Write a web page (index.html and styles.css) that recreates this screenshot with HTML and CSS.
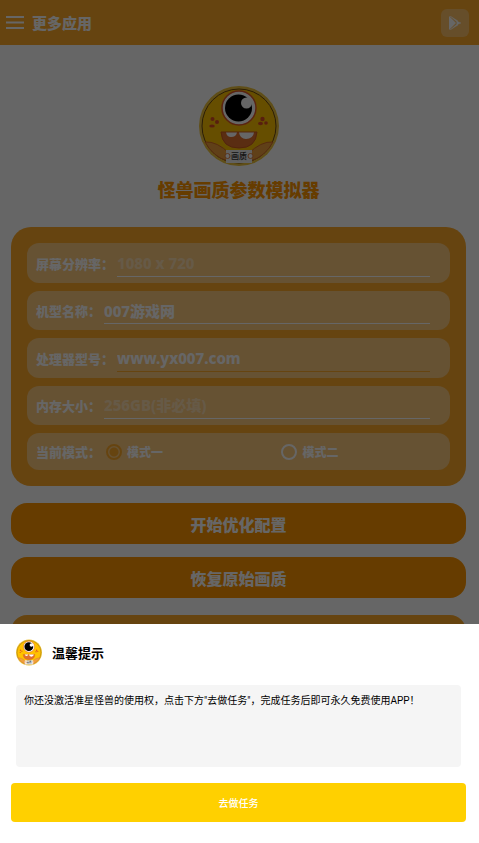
FILE: index.html
```html
<!DOCTYPE html>
<html lang="zh-CN">
<head>
<meta charset="utf-8">
<meta name="viewport" content="width=device-width, initial-scale=1">
<title>怪兽画质参数模拟器</title>
<link rel="stylesheet" href="styles.css">
</head>
<body>
<header class="topbar">
  <button class="menu" aria-label="菜单"><svg width="18" height="13" viewBox="0 0 18 13"><path d="M0 1H18M0 6.500H18M0 12H18" stroke="#fff" stroke-width="2"/></svg></button>
  <h1>更多应用</h1>
  <button class="play" aria-label="应用商店"><svg width="14" height="14" viewBox="0 0 14 14"><path d="M1 0L8 7L1 14Z" fill="#fff"/><path d="M2 0L9 6L10 5ZM2 14L9 8L10 9ZM9.500 5.500L13 7L9.500 8.500L8.500 7Z" fill="#fff" stroke="#fff" stroke-width=".4"/></svg></button>
</header>
<main class="page">
  <svg class="logo" viewBox="0 0 80 80" role="img" aria-label="怪兽">
    <g id="monster">
      <circle cx="40" cy="40" r="40" fill="#eec33c"/>
      <circle cx="40" cy="40" r="37" fill="#ffc200" stroke="#6b4a10" stroke-width="1"/>
      <path d="M6 56Q18 55 31 68L29 75Q14 71 6 56ZM74 56Q62 55 49 68L51 75Q66 71 74 56Z" fill="#f0a03c" stroke="#d66a2a" stroke-width="1"/>
      <circle cx="40" cy="22" r="17" fill="#fff" stroke="#e0592a" stroke-width="1.5"/>
      <circle cx="39.500" cy="22" r="13.500" fill="#000"/>
      <circle cx="47.500" cy="17" r="5.500" fill="#fff"/>
      <path d="M22 46H58Q57 62 40 62Q23 62 22 46Z" fill="#e0702f" stroke="#cf5a20" stroke-width="1"/>
      <path d="M27 46.500H38Q37 51 32 51Q28 51 27 46.500ZM40 46.500H55Q54 53 47 53Q41 53 40 46.500Z" fill="#fff"/>
      <g fill="#dd4f24"><circle cx="13.500" cy="33" r="2"/><circle cx="18" cy="36" r="2"/><ellipse cx="13" cy="40" rx="2.800" ry="1.500"/><circle cx="63.500" cy="33" r="2.200"/><circle cx="67" cy="37" r="1.800"/><ellipse cx="61.500" cy="37.500" rx="2.500" ry="1.700"/></g>
      <path d="M27 64H53V77H27Z" fill="#f2f2f2"/>
      <circle cx="28.500" cy="70" r="2.500" fill="#fff" stroke="#e08040"/><circle cx="51.500" cy="70" r="2.500" fill="#fff" stroke="#e08040"/>
      <text x="40" y="73" text-anchor="middle" class="badge">画质</text>
    </g>
  </svg>
  <h2>怪兽画质参数模拟器</h2>
  <form class="card">
    <div class="row"><label for="res">屏幕分辨率：</label><input class="field" id="res" placeholder="1080 x 720"></div>
    <div class="row"><label for="model">机型名称：</label><input class="field" id="model" value="007游戏网"></div>
    <div class="row"><label for="cpu">处理器型号：</label><input class="field current" id="cpu" value="www.yx007.com"></div>
    <div class="row"><label for="ram">内存大小：</label><input class="field" id="ram" placeholder="256GB(非必填)"></div>
    <div class="row mode"><span>当前模式：</span>
      <div class="options">
        <label><input type="radio" name="mode" checked>模式一</label>
        <label><input type="radio" name="mode">模式二</label>
      </div>
    </div>
  </form>
  <button class="action">开始优化配置</button>
  <button class="action">恢复原始画质</button>
  <div class="next"></div>
</main>
<div class="scrim"></div>
<section class="sheet" role="dialog" aria-labelledby="tip">
  <div class="sheet-head"><svg class="avatar" viewBox="0 0 80 80" aria-hidden="true"><use href="#monster"/></svg><h3 id="tip">温馨提示</h3></div>
  <p>你还没激活准星怪兽的使用权，点击下方"去做任务"，完成任务后即可永久免费使用APP！</p>
  <button class="task">去做任务</button>
</section>
</body>
</html>
```
FILE: styles.css
```css
* { box-sizing: border-box; margin: 0; }
html, body { height: 100%; }
body {
  background: #fff;
  color: #fff;
  font-family: "Noto Sans", "Noto Sans CJK SC", sans-serif;
  overflow: hidden;
}
button, input { font: inherit; color: inherit; border: 0; padding: 0; background: none; border-radius: 0; }
.badge { font-size: 8px; font-weight: 500; fill: #333; }
.topbar { display: flex; align-items: center; height: 45px; padding: 0 10px 0 6px; background: #ffaa2a; }
.menu, .play { display: flex; align-items: center; justify-content: center; }
.topbar h1 { flex: 1; margin-left: 8px; font-size: 15px; line-height: 20px; font-weight: 900; }
.play { width: 28px; height: 28px; border-radius: 6px; background: rgba(255, 255, 255, .3); }
.page { display: flex; flex-direction: column; padding: 41px 13px 0 11px; }
.logo { width: 80px; height: 80px; align-self: center; }
h2 { margin: 11px 0 23px; text-align: center; color: #ff9600; font-size: 18px; line-height: 27px; font-weight: 900; }
.card {
  display: grid;
  grid-template-rows: 40px 39px 40px 39px 37px;
  gap: 8px;
  padding: 16px;
  margin-bottom: 17px;
  border-radius: 20px;
  background: #ffaa2a;
}
.row {
  display: flex;
  align-items: center;
  gap: 3px;
  padding: 0 20px 0 9px;
  border-radius: 12px;
  background: rgba(255, 255, 255, .4);
  font-size: 13px;
  font-weight: 900;
  white-space: nowrap;
}
.field {
  flex: 1;
  min-width: 0;
  height: 27px;
  border-bottom: 1px solid #fff;
  font-size: 15px;
  font-weight: 800;
  outline: 0;
}
.field::placeholder { color: #fff; opacity: .4; }
.current { border-color: #ffaa2a; }
.mode { gap: 5px; padding-right: 0; }
.options { flex: 1; display: grid; grid-template-columns: 51% 1fr; }
.options label { display: flex; align-items: center; gap: 5px; font-size: 12px; }
.options input { appearance: none; width: 16px; height: 16px; margin: 0; border: 2px solid #fff; border-radius: 50%; }
.options input:checked { border-color: #ffaa2a; background: radial-gradient(circle, #ffaa2a 4px, transparent 5px); }
.action { height: 41px; margin-bottom: 13px; border-radius: 16px; background: #ff9600; font-size: 16px; font-weight: 900; }
.next { height: 41px; margin-top: 4px; border-radius: 16px; background: #ffaa2a; }
.scrim { position: fixed; inset: 0; background: rgba(0, 0, 0, .6); }
.sheet {
  position: fixed;
  left: 0;
  right: 0;
  bottom: 0;
  padding: 15px 13px 21px 11px;
  background: #fff;
  color: #000;
}
.sheet-head { display: flex; align-items: center; gap: 10px; margin: 0 5px 19px; }
.avatar { width: 26px; height: 27px; }
h3 { font-size: 13px; line-height: 20px; font-weight: 600; font-family: "Noto Sans CJK SC", sans-serif; }
.sheet p {
  min-height: 82px;
  margin: 0 5px 16px;
  padding: 8px;
  border-radius: 4px;
  background: #f5f5f5;
  font: 10px/15px Roboto, "Noto Sans CJK SC", sans-serif;
}
.task { display: block; width: 100%; height: 39px; border-radius: 4px; background: #ffd000; color: #fff; font-size: 10px; font-weight: 500; }
```
